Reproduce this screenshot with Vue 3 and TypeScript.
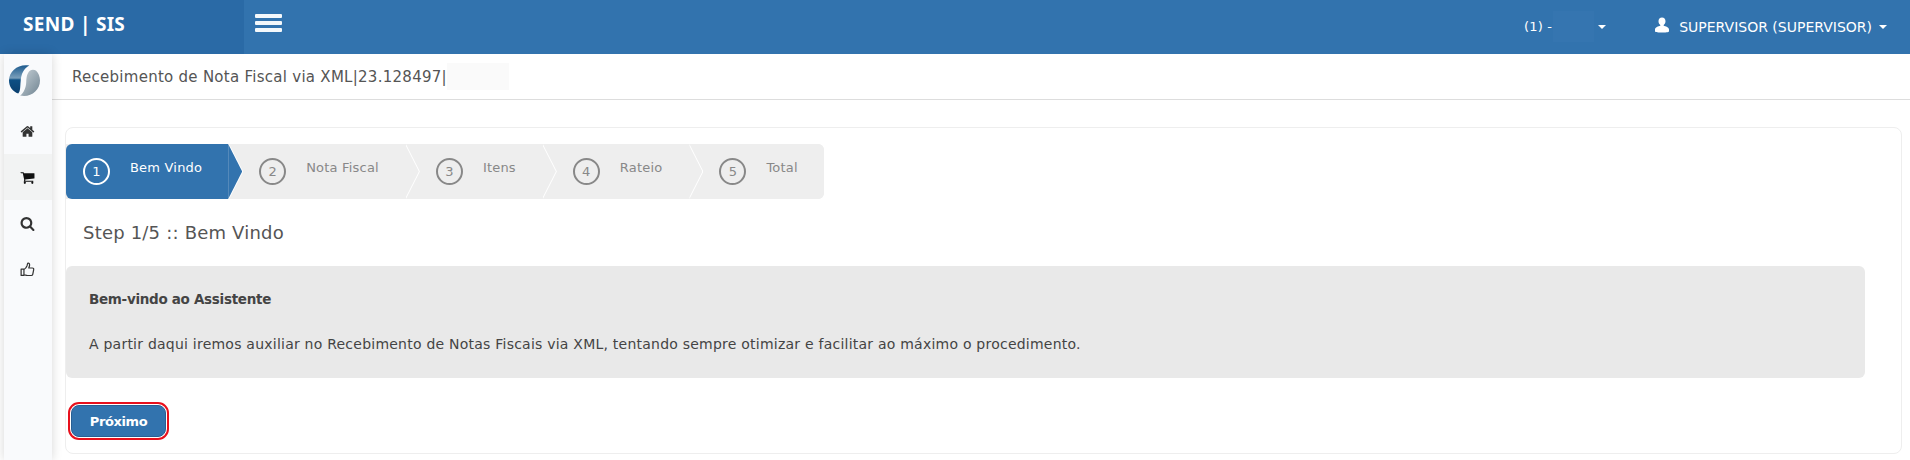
<script setup lang="ts">
const steps = [
  { n: 1, label: 'Bem Vindo' },
  { n: 2, label: 'Nota Fiscal' },
  { n: 3, label: 'Itens' },
  { n: 4, label: 'Rateio' },
  { n: 5, label: 'Total' },
];
const current = 1;

const menu = [
  { name: 'home', vb: '0 0 1792 1792', d: 'M1472 992v480q0 26-19 45t-45 19h-384v-384h-256v384h-384q-26 0-45-19t-19-45v-480q0-1 .5-3t.5-3l575-474 575 474q1 2 1 6zm223-69l-62 74q-8 9-21 11h-3q-13 0-21-7l-692-577-692 577q-12 8-24 7-13-2-21-11l-62-74q-8-10-7-23.500t11-21.500l719-599q32-26 76-26t76 26l244 204v-195q0-14 9-23t23-9h192q14 0 23 9t9 23v408l219 182q10 8 11 21.500t-7 23.500z' },
  { name: 'cart', vb: '0 0 1792 1792', d: 'M704 1536q0 52-38 90t-90 38-90-38-38-90 38-90 90-38 90 38 38 90zm896 0q0 52-38 90t-90 38-90-38-38-90 38-90 90-38 90 38 38 90zm128-1088v512q0 24-16.500 42.500t-40.500 21.500l-1044 122q13 60 13 70 0 16-24 64h920q26 0 45 19t19 45-19 45-45 19h-1024q-26 0-45-19t-19-45q0-11 8-31.500t16-36 21.500-40 15.500-29.500l-177-823h-204q-26 0-45-19t-19-45 19-45 45-19h256q16 0 28.500 6.500t19.500 15.500 13 24.500 8 26 5.500 29.500 4.500 26h1201q26 0 45 19t19 45z' },
  { name: 'search', vb: '0 0 1792 1792', d: 'M1216 832q0-185-131.500-316.500t-316.500-131.500-316.500 131.500-131.500 316.500 131.500 316.500 316.500 131.500 316.500-131.500 131.500-316.500zm512 832q0 52-38 90t-90 38q-54 0-90-38l-343-342q-179 124-399 124-143 0-273.500-55.500t-225-150-150-225-55.500-273.500 55.500-273.500 150-225 225-150 273.500-55.500 273.500 55.500 225 150 150 225 55.500 273.500q0 220-124 399l343 343q37 37 37 90z' },
];
</script>

<template>
  <div class="page">
    <header class="topbar">
      <div class="brand">SEND | SIS</div>
      <button class="burger" aria-label="menu">
        <span></span><span></span><span></span>
      </button>
      <div class="top-right">
        <div class="top-item company">
          <span>(1) -</span>
          <span class="blur-top"></span>
          <span class="caret"></span>
        </div>
        <div class="top-item user">
          <svg class="user-icon" viewBox="0 0 16 16" width="16" height="16">
            <path d="M8 0.500c-2.200 0-3.500 1.600-3.500 3.700 0 1.600 0.800 3 1.800 3.700v0.800c-1.900 0.500-5.300 1.400-5.300 3.800v1.700c0 0.700 1.500 1.300 7 1.300s7-0.600 7-1.300v-1.700c0-2.400-3.400-3.300-5.300-3.800v-0.800c1-0.700 1.800-2.100 1.800-3.700 0-2.100-1.300-3.700-3.500-3.700z" fill="#fff" />
          </svg>
          <span>SUPERVISOR (SUPERVISOR)</span>
          <span class="caret"></span>
        </div>
      </div>
    </header>

    <div class="body">
      <aside class="sidebar">
        <div class="logo">
          <svg viewBox="0 0 32 32" width="31" height="31">
            <defs>
              <linearGradient id="logoBlue" x1="0" y1="0" x2="0" y2="1">
                <stop offset="0" stop-color="#1c5a8e" />
                <stop offset="0.45" stop-color="#7a9fbb" />
                <stop offset="0.52" stop-color="#0d4f84" />
                <stop offset="1" stop-color="#0a3f6e" />
              </linearGradient>
              <linearGradient id="logoGrey" x1="0" y1="0" x2="1" y2="1">
                <stop offset="0" stop-color="#c9d2d8" />
                <stop offset="1" stop-color="#6f8391" />
              </linearGradient>
            </defs>
            <path d="M21 0.600C10 -1.500 0 6 0 16c0 6.500 4 11.500 9.500 13.500C12 27 11.500 22 12 17c0.500-7 3-13.500 9-16.400z" fill="url(#logoBlue)" />
            <path d="M21.500 6c-3 2.500-3.500 7-3.700 11.500-0.300 6-2.300 11-6.300 14 10.500 2.500 20.500-5 20.500-15.500 0-4-1.500-7.500-4-10-2-1.500-4.500-1.500-6.500 0z" fill="url(#logoGrey)" />
          </svg>
        </div>
        <div v-for="m in menu" :key="m.name" class="menu-item" :class="{ active: m.name === 'cart' }">
          <svg :viewBox="m.vb" width="15" height="15"><path :d="m.d" /></svg>
        </div>
        <div class="menu-item">
          <svg viewBox="0 0 16 16" width="15" height="15">
            <path d="M1.200 7.500h3v6.800h-3zM4.200 8c1.500-0.800 2.700-2.400 3.300-4 0.300-1 0.300-2.500 1-2.800 1.200-0.300 1.900 1 1.700 2.400-0.100 1-0.600 2-0.900 2.800h3.900c1 0 1.600 0.800 1.400 1.700l-1 5c-0.200 0.800-0.800 1.300-1.600 1.300H8c-1.500 0-2.400-0.700-3.800-0.800" fill="none" stroke="#333" stroke-width="1.300" stroke-linejoin="round" />
          </svg>
        </div>
      </aside>

      <main class="main">
        <div class="subhead">
          <span>Recebimento de Nota Fiscal via XML|23.128497|</span>
          <span class="blur-sub"></span>
        </div>

        <div class="content">
          <section class="card">
            <ol class="wizard">
              <li
                v-for="s in steps"
                :key="s.n"
                class="step"
                :class="{ current: s.n === current, first: s.n === 1, last: s.n === steps.length }"
                :style="{ zIndex: steps.length - s.n }"
              >
                <span class="num">{{ s.n }}</span>
                <span class="label">{{ s.label }}</span>
              </li>
            </ol>

            <h3 class="step-title">Step 1/5 :: Bem Vindo</h3>

            <div class="notice">
              <p class="notice-title">Bem-vindo ao Assistente</p>
              <p class="notice-text">A partir daqui iremos auxiliar no Recebimento de Notas Fiscais via XML, tentando sempre otimizar e facilitar ao máximo o procedimento.</p>
            </div>

            <div class="actions">
              <button class="next">Próximo</button>
            </div>
          </section>
        </div>
      </main>
    </div>
  </div>
</template>

<style>
html, body { margin: 0; background: #fff; }
</style>

<style scoped>
.page {
  width: 1910px;
  height: 460px;
  overflow: hidden;
  display: flex;
  flex-direction: column;
  font-family: "DejaVu Sans", sans-serif;
  color: #555;
}
.topbar {
  height: 54px;
  flex: none;
  display: flex;
  align-items: center;
  background: #3273ae;
  color: #fff;
}
.brand {
  width: 244px;
  height: 54px;
  box-sizing: border-box;
  padding-left: 23px;
  background: #2a6aa6;
  font-family: "Noto Sans", sans-serif;
  font-weight: 700;
  font-size: 19px;
  letter-spacing: 0.3px;
  line-height: 48px;
}
.burger {
  margin-left: 11px;
  padding: 0;
  border: 0;
  background: none;
  width: 27px;
  display: flex;
  flex-direction: column;
  gap: 3px;
  margin-top: -8px;
}
.burger span {
  display: block;
  height: 4px;
  border-radius: 1px;
  background: #fff;
  opacity: 0.95;
}
.top-right {
  margin-left: auto;
  display: flex;
  align-items: center;
  font-size: 13px;
}
.top-item {
  display: flex;
  align-items: center;
  margin-top: -1px;
}
.company { margin-right: 48px; letter-spacing: 0.2px; }
.user { margin-right: 23px; font-size: 14px; }
.user .caret { margin-left: 7px; }
.blur-top {
  width: 41px;
  height: 31px;
  margin-left: 1px;
  background: #3575b0;
}
.caret {
  width: 0;
  height: 0;
  margin-left: 4px;
  border-left: 4px solid transparent;
  border-right: 4px solid transparent;
  border-top: 4px solid #fff;
}
.user-icon { margin-right: 9px; margin-top: -3px; }
.body {
  flex: 1;
  display: flex;
  min-height: 0;
}
.sidebar {
  width: 48px;
  margin-left: 4px;
  flex: none;
  background: #f9fafc;
  box-shadow: 0 0 10px rgba(0, 0, 0, 0.16);
  position: relative;
  z-index: 1;
}
.logo {
  height: 54px;
  box-sizing: border-box;
  padding: 11px 0 0 5px;
}
.menu-item {
  height: 46px;
  display: flex;
  align-items: center;
  justify-content: center;
  padding-right: 2px;
  box-sizing: border-box;
}
.menu-item svg { fill: #333; }
.menu-item.active { background: #f2f3f3; }
.menu-item.active svg { fill: #111; }
.main {
  flex: 1;
  min-width: 0;
}
.subhead {
  height: 45px;
  border-bottom: 1px solid #ddd;
  display: flex;
  align-items: center;
  padding-left: 20px;
  font-size: 15px;
  letter-spacing: 0.27px;
  color: #555;
}
.blur-sub {
  width: 62px;
  height: 27px;
  background: #fafafa;
}
.content {
  padding: 27px 8px 0 13px;
}
.card {
  height: 327px;
  box-sizing: border-box;
  border: 1px solid #eee;
  border-radius: 8px;
  padding: 16px 36px 0 0;
}
.wizard {
  list-style: none;
  margin: 0;
  padding: 0;
  display: inline-flex;
  vertical-align: top;
  background: #eee;
  border-radius: 0 6px 6px 0;
}
.step {
  position: relative;
  height: 55px;
  box-sizing: border-box;
  padding: 0 26px 0 31px;
  display: flex;
  align-items: flex-start;
  background: #eee;
  color: #888;
  font-size: 13px;
  letter-spacing: 0.2px;
}
.step.first { padding-left: 17px; border-radius: 6px 0 0 6px; }
.step.last { border-radius: 0 6px 6px 0; }
.step.current { background: #3273ae; color: #fff; }
.step:not(.last)::before,
.step:not(.last)::after {
  content: "";
  position: absolute;
  top: 0;
  bottom: 0;
  left: 100%;
  width: 14px;
  clip-path: polygon(0 0, 100% 50%, 0 100%);
}
.step:not(.last)::before { margin-left: 1px; background: #fff; }
.step:not(.last)::after { background: inherit; }
.num {
  width: 27px;
  height: 27px;
  box-sizing: border-box;
  margin-top: 14px;
  border: 2px solid #888;
  border-radius: 50%;
  display: flex;
  align-items: center;
  justify-content: center;
  font-size: 13px;
  line-height: 1;
}
.step.current .num { border-color: #fff; }
.label {
  margin-left: 20px;
  margin-top: 16px;
  line-height: 15px;
  white-space: nowrap;
}
.step-title {
  margin: 22px 0 0 17px;
  font-size: 18px;
  letter-spacing: 0.2px;
  line-height: 24px;
  font-weight: 400;
  color: #555;
}
.notice {
  margin-top: 21px;
  height: 112px;
  box-sizing: border-box;
  padding: 25px 23px 0;
  background: #e9e9e9;
  border-radius: 6px;
  font-size: 14px;
  color: #444;
}
.notice p { margin: 0; line-height: 17px; }
.notice-title { font-weight: 700; font-size: 13.5px; letter-spacing: -0.3px; }
.notice-text { margin-top: 28px !important; letter-spacing: 0.23px; }
.actions {
  margin-top: 27px;
  padding-left: 5px;
}
.next {
  width: 95px;
  height: 32px;
  padding: 0;
  border: 1px solid #285f94;
  border-radius: 8px;
  background: #3273ae;
  color: #fff;
  font-family: "DejaVu Sans", sans-serif;
  font-weight: 700;
  font-size: 13px;
  letter-spacing: -0.4px;
  outline: 2px solid #e8101c;
  outline-offset: 1px;
}
</style>
